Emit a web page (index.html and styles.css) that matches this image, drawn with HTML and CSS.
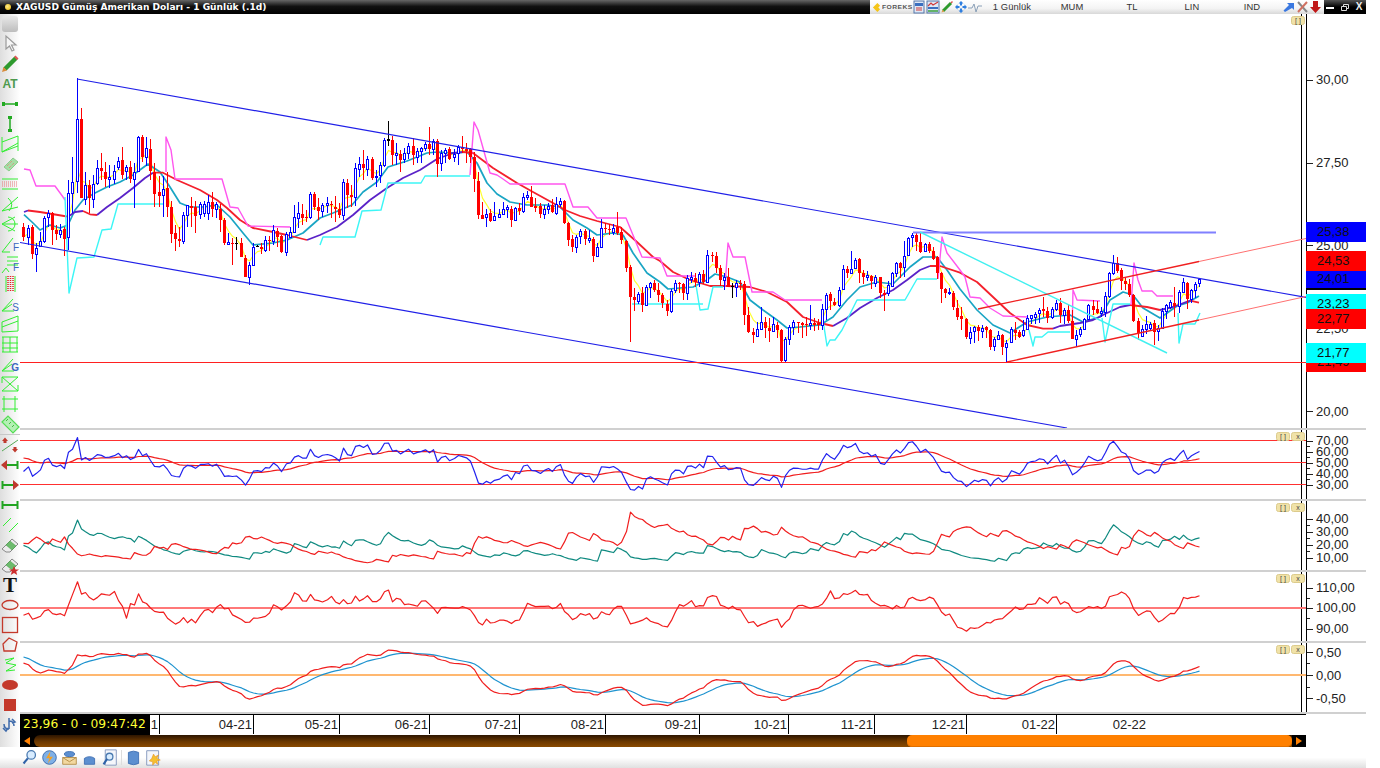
FILE: index.html
```html
<!DOCTYPE html>
<html lang="tr">
<head>
<meta charset="utf-8">
<title>XAGUSD</title>
<link rel="stylesheet" href="styles.css">
</head>
<body>
<div class="app">
  <header class="titlebar">
    <div class="title-left"><span class="dot"></span><span class="title">XAGUSD Gümüş Amerikan Doları - 1 Günlük (.1d)</span></div>
    <div class="tools">
      <div class="logo"><svg class="chev" viewBox="0 0 10 12"><path d="M6 1 1 6l5 5 3-3-2-2 2-2z"/></svg><span>FOREKS</span></div>
      <svg class="tool" viewBox="0 0 14 14"><rect class="t-panel" x="2" y="1" width="10" height="12"/><rect class="t-blue" x="3" y="3" width="8" height="3"/><path class="t-red" d="M4 8h6M4 10h6"/></svg>
      <svg class="tool" viewBox="0 0 14 14"><rect class="t-panel" x="1" y="1" width="12" height="12"/><path class="t-red" d="M2 6l3-3 2 2 5-3"/><path class="t-green" d="M2 11h10"/><rect class="t-blue" x="2" y="7" width="10" height="2"/></svg>
      <svg class="tool" viewBox="0 0 14 14"><path class="t-pencil" d="M3 11 11 3"/><path class="t-tip" d="M12 1l1 1-1.500 1.500-1-1z"/><path class="t-nib" d="M1.500 12.500l1-3 2 2z"/></svg>
      <svg class="tool" viewBox="0 0 14 14"><path class="t-diamond" d="M7 1l2.500 2.500h-1.500v2h-2v-2H4.500zM7 13l-2.500-2.500H6v-2h2v2h1.500zM1 7l2.500-2.500V6h2v2h-2v1.500zM13 7l-2.500 2.500V8h-2V6h2V4.500z"/></svg>
      <svg class="tool" viewBox="0 0 14 14"><path class="t-pulse" d="M0 8h4l2-4 2 8 2-6h4"/></svg>
      <span class="cell">1 Günlük</span><span class="cell">MUM</span><span class="cell">TL</span><span class="cell">LIN</span><span class="cell">IND</span>
      <svg class="tool" viewBox="0 0 14 14"><path class="t-arrow-blue" d="M3 12 1.500 10.500 7 5 5 3h7v7L10 8z"/></svg>
      <svg class="tool tool-n" viewBox="0 0 13 14"><path class="t-cross" d="M2 2l9 10"/><path class="t-cross2" d="M11 2 2 12"/></svg>
      <svg class="tool tool-n" viewBox="0 0 13 14"><path class="t-arrow-red" d="M4 1h5v6h3l-5.500 6L1 7h3z"/></svg>
    </div>
    <div class="winctl">
      <svg class="winbtn" viewBox="0 0 14 14"><rect class="w" x="2" y="7" width="8" height="2"/></svg>
      <svg class="winbtn" viewBox="0 0 14 14"><path class="w-line" d="M3.500 6.500h5v4h-5zM5.500 6V4.500h5v4H9"/></svg>
      <span class="winx">X</span>
    </div>
  </header>

  <div class="workspace">
    <nav class="sidebar">
      <div class="sb-top"></div>
      <svg class="ico" viewBox="0 0 20 20"><path class="i-cursor" d="M6 2v13l3.500-3 2.500 5 2-1-2.500-5H16z"/></svg>
      <svg class="ico" viewBox="0 0 20 20"><path class="i-pencil" d="M5 15 16 4"/><path class="i-tip" d="M15.500 1.500l3 3-1.500 1.500-3-3z"/><path class="i-nib" d="M2 18l1.500-5 3.500 3.500z"/></svg>
      <div class="ico ico-at">AT</div>
      <svg class="ico" viewBox="0 0 20 20"><path class="i-beam" d="M4 10h12"/><rect class="i-beamf" x="2" y="8" width="3" height="4"/><rect class="i-beamf" x="15" y="8" width="3" height="4"/></svg>
      <svg class="ico" viewBox="0 0 20 20"><path class="i-beam" d="M10 4v12"/><rect class="i-beamf" x="8" y="2" width="4" height="3"/><rect class="i-beamf" x="8" y="15" width="4" height="3"/></svg>
      <svg class="ico" viewBox="0 0 20 20"><path class="i-g" d="M2 3v15M2 8 18 2M2 18 18 12M18 2v15M2 18l16-9"/></svg>
      <svg class="ico" viewBox="0 0 20 20"><path class="i-gem" d="M4 13 13 4l5 4-9 9z"/><path class="i-dots" d="M7 12l5-5M9 14l5-5"/></svg>
      <svg class="ico" viewBox="0 0 20 20"><path class="i-g" d="M2 5h16M2 15h16"/><path class="i-dots" d="M2 8h16M2 10h16M2 12h16"/></svg>
      <svg class="ico" viewBox="0 0 20 20"><path class="i-g" d="M2 17 18 3M2 17l16-4"/><path class="i-g" d="M8 4q7 6 1 13"/></svg>
      <svg class="ico" viewBox="0 0 20 20"><path class="i-g" d="M2 10h16M2 10 15 3M2 10l13 7"/><path class="i-g" d="M8 3a7 7 0 0 1 0 14"/></svg>
      <div class="ico ico-l"><svg viewBox="0 0 20 20"><path class="i-g" d="M2 18 13 4M2 18h8"/></svg><span class="letter">F</span></div>
      <div class="ico ico-l"><svg viewBox="0 0 20 20"><path class="i-g" d="M7 3h11M7 7h11M7 11h11M2 19l4-5 3 4"/></svg><span class="letter">F</span></div>
      <svg class="ico" viewBox="0 0 20 20"><path class="i-g" d="M6 2v16M15 2v16"/><path class="i-dots-w" d="M8 2v16M10.500 2v16M13 2v16"/></svg>
      <div class="ico ico-l"><svg viewBox="0 0 20 20"><path class="i-g" d="M2 17 13 5M2 17h12M2 17l10-7"/></svg><span class="letter">S</span></div>
      <svg class="ico" viewBox="0 0 20 20"><path class="i-g" d="M2 8 18 2v15L2 18zM2 13l16-6"/></svg>
      <svg class="ico" viewBox="0 0 20 20"><path class="i-g" d="M2 3h16M2 9h16M2 14h16M2 18h16M3 3v15M10 3v15M17 3v15"/></svg>
      <div class="ico ico-l"><svg viewBox="0 0 20 20"><path class="i-g" d="M2 17 13 5M2 17h12M2 17l10-7"/></svg><span class="letter lg">G</span></div>
      <svg class="ico" viewBox="0 0 20 20"><path class="i-g" d="M2 3h16L2 17h16M2 3l16 14M2 3v6M18 11v6"/></svg>
      <svg class="ico" viewBox="0 0 20 20"><path class="i-g" d="M4 2v16M15 2v16M2 5h16M2 15h16"/></svg>
      <svg class="ico" viewBox="0 0 20 20"><path class="i-ruler" d="M2 8 8 2l11 11-6 6z"/><path class="i-rulerm" d="M6 7l2-2M9 10l2-2M12 13l2-2"/></svg>
      <div class="sb-sep"></div>
      <svg class="ico" viewBox="0 0 20 20"><path class="i-red" d="M2 6 5 2.500 8 6H6.500v2h-3V6z"/><path class="i-red" d="M12 14l3 3.500 3-3.500h-1.500v-2h-3v2z"/><path class="i-g2" d="M2 16 18 5"/></svg>
      <svg class="ico" viewBox="0 0 20 20"><path class="i-line" d="M7 10h11M17.500 6v8"/><path class="i-red" d="M1 10l6-5v10z"/></svg>
      <svg class="ico" viewBox="0 0 20 20"><path class="i-line" d="M2 10h11M2.500 6v8"/><path class="i-red" d="M19 10l-6-5v10z"/></svg>
      <svg class="ico" viewBox="0 0 20 20"><path class="i-line" d="M2 10h16M2.500 6v8M17.500 6v8"/></svg>
      <svg class="ico" viewBox="0 0 20 20"><path class="i-g" d="M3 11 11 3M9 17l9-9"/></svg>
      <svg class="ico" viewBox="0 0 20 20"><path class="i-erase" d="M2 14 12 4l6 5-8 8H6z"/><path class="i-gband" d="M6 10l4-4 6 5-4 4z"/></svg>
      <svg class="ico" viewBox="0 0 20 20"><path class="i-erase" d="M2 14 12 4l6 5-8 8H6z"/><path class="i-gband" d="M6 10l4-4 6 5-4 4z"/><path class="i-star" d="M14 11l1.500 3.500H19l-2.800 2 1 3.500-3.200-2-3.200 2 1-3.500-2.800-2h3.500z"/></svg>
      <div class="ico ico-t">T</div>
      <svg class="ico" viewBox="0 0 20 20"><ellipse class="i-shape" cx="10" cy="10" rx="8" ry="4.500"/></svg>
      <svg class="ico" viewBox="0 0 20 20"><rect class="i-shape" x="2.500" y="2.500" width="15" height="15"/></svg>
      <svg class="ico" viewBox="0 0 20 20"><path class="i-shape" d="M3 9 9 3l8 4-2 9H4z"/></svg>
      <svg class="ico" viewBox="0 0 20 20"><path class="i-g" d="M5 5l9-2-8 5 10 2-10 6 9-1"/></svg>
      <svg class="ico" viewBox="0 0 20 20"><ellipse class="i-fill" cx="10" cy="10" rx="8" ry="5"/></svg>
      <svg class="ico" viewBox="0 0 20 20"><rect class="i-fill" x="4" y="4" width="12" height="12"/></svg>
      <svg class="ico" viewBox="0 0 20 20"><path class="i-swap" d="M4 9q0 5 5 5M9 3v11M14 11q0-5-5-5M12 4l3 3-3 1M3 13l3 3 2-3"/></svg>
    </nav>

    <main class="main">
      <section class="pane pane-main">
        <svg class="plot" id="p1" viewBox="20 14 1286 414" width="1286" height="414"></svg>
        <div class="axis" data-ticks="80 163 245 328 411">
          <span class="val" style="top:58px">30,00</span>
          <span class="val" style="top:141px">27,50</span>
          <span class="val" style="top:224px">25,00</span>
          <span class="val" style="top:307px">22,50</span>
          <span class="val" style="top:390px">20,00</span>
          <span class="tag t-blue-bg" style="top:208px">25,38</span>
          <span class="tag t-blue-bg tag-last" style="top:255px">24,01</span>
          <span class="tag t-red-bg" style="top:237px">24,53</span>
          <span class="tag t-cyan-bg" style="top:280px">23,23</span>
          <span class="tag t-red-bg" style="top:295px">22,77</span>
          <span class="tag t-red-bg" style="top:338px">21,49</span>
          <span class="tag t-cyan-bg" style="top:329px">21,77</span>
        </div>
        <div class="pbtns"><span class="pbtn">[ ]</span></div>
      </section>
      <section class="pane">
        <svg class="plot" id="p2" viewBox="20 430 1286 69" width="1286" height="69"></svg>
        <div class="axis" data-ticks="441 452 463 474 485" data-minor="446 457 468 479">
          <span class="val" style="top:3px">70,00</span>
          <span class="val" style="top:14px">60,00</span>
          <span class="val" style="top:25px">50,00</span>
          <span class="val" style="top:36px">40,00</span>
          <span class="val" style="top:47px">30,00</span>
        </div>
        <div class="pbtns"><span class="pbtn">[ ]</span><span class="pbtn">x</span></div>
      </section>
      <section class="pane">
        <svg class="plot" id="p3" viewBox="20 501 1286 69" width="1286" height="69"></svg>
        <div class="axis" data-ticks="519 532 545 558" data-minor="525 538 551">
          <span class="val" style="top:10px">40,00</span>
          <span class="val" style="top:23px">30,00</span>
          <span class="val" style="top:36px">20,00</span>
          <span class="val" style="top:49px">10,00</span>
        </div>
        <div class="pbtns"><span class="pbtn">[ ]</span><span class="pbtn">x</span></div>
      </section>
      <section class="pane">
        <svg class="plot" id="p4" viewBox="20 572 1286 69" width="1286" height="69"></svg>
        <div class="axis" data-ticks="588 608 629" data-minor="598 618">
          <span class="val" style="top:8px">110,00</span>
          <span class="val" style="top:28px">100,00</span>
          <span class="val" style="top:49px">90,00</span>
        </div>
        <div class="pbtns"><span class="pbtn">[ ]</span><span class="pbtn">x</span></div>
      </section>
      <section class="pane">
        <svg class="plot" id="p5" viewBox="20 643 1286 69" width="1286" height="69"></svg>
        <div class="axis" data-ticks="652 675 698" data-minor="663 687">
          <span class="val" style="top:2px">0,50</span>
          <span class="val" style="top:25px">0,00</span>
          <span class="val" style="top:48px">-0,50</span>
        </div>
        <div class="pbtns"><span class="pbtn">[ ]</span><span class="pbtn">x</span></div>
      </section>
      <div class="timeaxis">
        <div class="clock">23,96 - 0 - 09:47:42</div>
        <div class="tcell">1</div>
        <div class="tcell">04-21</div>
        <div class="tcell">05-21</div>
        <div class="tcell">06-21</div>
        <div class="tcell">07-21</div>
        <div class="tcell">08-21</div>
        <div class="tcell">09-21</div>
        <div class="tcell">10-21</div>
        <div class="tcell">11-21</div>
        <div class="tcell">12-21</div>
        <div class="tcell">01-22</div>
        <div class="tcell">02-22</div>
      </div>
      <div class="scroll">
        <div class="cap"><span class="arr-l"></span></div>
        <div class="track"><div class="thumb"></div></div>
        <div class="cap"><span class="arr-r"></span></div>
      </div>
    </main>
  </div>

  <footer class="bottombar">
    <svg class="bico" viewBox="0 0 20 20"><circle class="b-glass" cx="12" cy="7" r="5"/><path class="b-handle" d="M8 11 3 17"/></svg>
    <svg class="bico" viewBox="0 0 20 20"><circle class="b-ball" cx="10" cy="10" r="8"/><path class="b-bolt" d="M11 3 6 11h4l-2 6 6-8h-4z"/></svg>
    <svg class="bico" viewBox="0 0 20 20"><path class="b-env" d="M2 10h16v8H2z"/><path class="b-envl" d="M2 10l8 5 8-5"/><ellipse class="b-can" cx="10" cy="6" rx="6" ry="3"/></svg>
    <svg class="bico" viewBox="0 0 20 20"><path class="b-can" d="M4 11q6-4 12 0v7H4z"/></svg>
    <svg class="bico" viewBox="0 0 20 20"><path class="b-page" d="M5 1h13v18H5z"/><circle class="b-glass" cx="10" cy="9" r="4"/><path class="b-handle" d="M7 12 3 18"/></svg>
    <span class="bsep"></span>
    <svg class="bico" viewBox="0 0 20 20"><path class="b-can" d="M4 4q6-3 12 0v13q-6 3-12 0z"/></svg>
    <svg class="bico" viewBox="0 0 20 20"><path class="b-page" d="M2 2h14v17H2z"/><path class="b-sun" d="M10 6l2 3 4-2-2 4 4 2-4 1 1 4-3-2-3 3v-4l-4-1 3-3z"/></svg>
  </footer>
</div>
<script src="chart.js"></script>
</body>
</html>
```
FILE: styles.css
```css
* { box-sizing: border-box; }
html, body { margin: 0; padding: 0; height: 768px; overflow: hidden; background: #fff; }
body { font-family: "Liberation Sans", Arial, sans-serif; color: #222; }
.app { width: 1366px; height: 768px; display: flex; flex-direction: column; }

/* title bar */
.titlebar { height: 14px; display: flex; flex: none; }
.title-left { width: 870px; display: flex; align-items: center; gap: 5px; padding-left: 5px; background: linear-gradient(#666, #111 45%, #000); }
.dot { width: 6px; height: 6px; border-radius: 50%; background: radial-gradient(circle at 40% 40%, #ffe98a, #e8b800); }
.title { color: #fff; font: bold 9.08px/14px "DejaVu Sans", sans-serif; white-space: nowrap; }
.tools { flex: 1; display: flex; align-items: center; padding-left: 2px; background: linear-gradient(#fff, #f4f4f4 60%, #d8d8d8); }
.logo { width: 40px; display: flex; align-items: center; gap: 1px; }
.logo span { font: bold 6px/14px "Liberation Sans", sans-serif; letter-spacing: .4px; color: #555; transform: scaleX(1.12); transform-origin: left; }
.chev { width: 9px; height: 11px; flex: none; }
.chev path { fill: #f5c518; }
.tool { width: 14px; height: 14px; flex: none; }
.tool-n { width: 13px; }
.cell { width: 60px; text-align: center; font: 9.4px/14px "Liberation Sans", sans-serif; letter-spacing: .1px; color: #333; flex: none; }
.t-panel { fill: #dfe8f5; stroke: #5577aa; stroke-width: 1; }
.t-blue { fill: #3a6fc0; }
.t-red { fill: none; stroke: #d03a3a; stroke-width: 1.2; }
.t-green { fill: none; stroke: #3aa03a; stroke-width: 1.5; }
.t-pencil { fill: none; stroke: #2c9a2c; stroke-width: 3; }
.t-tip { fill: #e05050; }
.t-nib { fill: #e0a050; }
.t-diamond { fill: #2f7fe0; }
.t-pulse { fill: none; stroke: #8aa0b8; stroke-width: 1; }
.t-arrow-blue { fill: #3a78e0; }
.t-cross { fill: none; stroke: #888; stroke-width: 2; }
.t-cross2 { fill: none; stroke: #d07060; stroke-width: 2; }
.t-arrow-red { fill: #c01818; }
.winctl { width: 42px; display: flex; align-items: center; background: linear-gradient(#555, #000 50%); }
.winbtn { width: 14px; height: 14px; flex: none; }
.w { fill: #fff; }
.w-line { fill: none; stroke: #ddd; stroke-width: 1; }
.winx { width: 14px; text-align: center; font: bold 10px/14px "Liberation Sans", sans-serif; color: #eee; }

/* layout */
.workspace { flex: 1; display: flex; min-height: 0; }
.sidebar { width: 20px; flex: none; padding-top: 2px; display: flex; flex-direction: column; background: linear-gradient(to right, #dedede, #fff); }
.sb-top { height: 16px; margin: 0 2px 2px; flex: none; border-radius: 3px; background: linear-gradient(#e8e8e8, #bdbdbd); }
.ico { width: 20px; height: 20px; flex: none; display: block; position: relative; }
.sb-sep { height: 1px; flex: none; background: #c8c8c8; }
.ico-at { font: bold 12px/20px "Liberation Sans", sans-serif; color: #4e9a4e; text-align: center; }
.ico-t { font: bold 21px/20px "Liberation Serif", serif; color: #111; text-align: center; }
.ico-l svg { width: 20px; height: 20px; display: block; }
.letter { position: absolute; right: 1px; bottom: 1px; font: 10px/10px "Liberation Sans", sans-serif; color: #3a66c0; }
.lg { font-weight: bold; }
.i-cursor { fill: #f6f6f6; stroke: #9a9a9a; stroke-width: 1.2; }
.i-pencil { fill: none; stroke: #2e9a2e; stroke-width: 4.500; }
.i-tip { fill: #e05555; }
.i-nib { fill: #d88a3a; }
.i-beam { fill: none; stroke: #22aa22; stroke-width: 1.5; }
.i-beamf { fill: #22aa22; }
.i-g { fill: none; stroke: #33ee33; stroke-width: 1; }
.i-g2 { fill: none; stroke: #55aa55; stroke-width: 1; }
.i-gem { fill: #a5dfa5; stroke: #8ccc8c; stroke-width: 1; }
.i-dots { fill: none; stroke: #e87878; stroke-width: 1; stroke-dasharray: 1 1; }
.i-dots-w { fill: none; stroke: #e02020; stroke-width: 1.5; stroke-dasharray: 1 1; }
.i-ruler { fill: #b4f0b4; stroke: #55dd55; stroke-width: 1.2; }
.i-rulerm { fill: none; stroke: #44bb44; stroke-width: 1; }
.i-red { fill: #bf3a2e; }
.i-line { fill: none; stroke: #22a522; stroke-width: 2; }
.i-erase { fill: #ececec; stroke: #888; stroke-width: 1; }
.i-gband { fill: #6dbb6d; stroke: #3f9a3f; stroke-width: .5; }
.i-star { fill: #cc2f2f; }
.i-shape { fill: none; stroke: #c4392b; stroke-width: 1.3; }
.i-fill { fill: #c4392b; }
.i-swap { fill: none; stroke: #3e6aaa; stroke-width: 1.5; }

.main { flex: 1; display: flex; flex-direction: column; min-width: 0; }
.pane { height: 71px; flex: none; display: flex; position: relative; border-bottom: 2px solid #d0d0d0; }
.pane-main { height: 416px; }
.plot { flex: none; display: block; overflow: hidden; border-right: 0; }
.axis { flex: 1; position: relative; border-left: 1px solid #000; }
.axis svg { position: absolute; left: 0; top: 0; }
.val { position: absolute; left: 9px; font-size: 13px; line-height: 16px; color: #222; white-space: nowrap; }
.tag { position: absolute; left: -1px; width: 60px; height: 20px; padding-left: 11px; font-size: 13px; line-height: 20px; color: #111; }
.tag-last { height: 21px; border-bottom: 2px solid #000; line-height: 19px; }
.t-blue-bg { background: #0000ff; }
.t-red-bg { background: #ff0000; }
.t-cyan-bg { background: #00ffff; }
.pbtns { position: absolute; top: 2px; left: 1256px; width: 29px; display: flex; justify-content: flex-end; gap: 1px; }
.pbtn { width: 14px; height: 9px; flex: none; font-size: 7px; line-height: 8px; text-align: center; color: #444; border-radius: 2.5px; background: #f0e2a8; border: 1px solid #dccb8c; white-space: nowrap; }

/* chart classes */
.vline { stroke: #000; stroke-width: 1; shape-rendering: crispEdges; }
.hl-red { stroke: #ff3030; stroke-width: 1.4; shape-rendering: crispEdges; }
.hl-red-l { stroke: #ff7878; stroke-width: 2; shape-rendering: crispEdges; }
.hl-orange { stroke: #ffb870; stroke-width: 2; shape-rendering: crispEdges; }
.ln { fill: none; stroke-linejoin: round; }
.ma-purple { stroke: #5a22c8; stroke-width: 1.8; }
.ma-red { stroke: #f4202c; stroke-width: 1.8; }
.teal { stroke: #19a5c4; stroke-width: 1.7; }
.yel { stroke: #ffff33; stroke-width: 1.2; }
.mag { stroke: #ff55ee; stroke-width: 1.4; }
.cya { stroke: #3cf6f6; stroke-width: 1.4; }
.tr-blue { stroke: #2020e8; stroke-width: 1.15; }
.tr-blueh { stroke: #8080ff; stroke-width: 2; }
.tr-red { stroke: #f02020; stroke-width: 1.3; }
.tr-red-thin { stroke: #ff7070; stroke-width: 1; }
.tr-redh { stroke: #ff2020; stroke-width: 1; shape-rendering: crispEdges; }
.tr-cyan { stroke: #40f0f0; stroke-width: 1.4; }
.c-blue { fill: #0000ff; shape-rendering: crispEdges; }
.c-red { fill: #ff0000; shape-rendering: crispEdges; }
.c-black { fill: #000; shape-rendering: crispEdges; }
.c-box { fill: #fff; stroke: #0000ff; stroke-width: 1; shape-rendering: crispEdges; }
.s-blue { stroke: #2222ee; stroke-width: 1.2; }
.s-red { stroke: #f01e1e; stroke-width: 1.2; }
.s-green { stroke: #0f8a80; stroke-width: 1.2; }
.s-sky { stroke: #1f93cf; stroke-width: 1.2; }
.tick { stroke: #222; stroke-width: 1; shape-rendering: crispEdges; }

/* time axis */
.timeaxis { height: 21px; flex: none; width: 1286px; display: grid; grid-template-columns: 130px 10px 94px 86px 90px 90px 86px 94px 89px 86px 92px 90px 90px; border-top: 1px solid #000; background: #fff; overflow: hidden; }
.clock { background: #000; color: #ffff33; font: 12.3px/19px "DejaVu Sans", sans-serif; height: 20px; padding-left: 3px; white-space: nowrap; overflow: hidden; }
.tcell { border-right: 1px solid #000; text-align: right; font-size: 13px; line-height: 19px; color: #222; padding-right: 1px; height: 19px; overflow: hidden; }
.tcell:last-child { border-right: 0; }

/* scrollbar */
.scroll { height: 12px; flex: none; width: 1286px; display: flex; background: #000; }
.cap { width: 14px; flex: none; display: flex; align-items: center; justify-content: center; }
.arr-l { width: 0; height: 0; border-style: solid; border-width: 4px 6px 4px 0; border-color: transparent #ff8000 transparent transparent; }
.arr-r { width: 0; height: 0; border-style: solid; border-width: 4px 0 4px 6px; border-color: transparent transparent transparent #ff8000; }
.track { flex: 1; display: flex; justify-content: flex-end; border-radius: 6px 0 0 6px; background: linear-gradient(#2c1500, #6b3800 55%, #8a4a00); }
.thumb { width: 385px; border-radius: 5px; background: #ff8000; box-shadow: inset 0 -1px 0 #e07000; }

/* bottom toolbar */
.bottombar { height: 21px; flex: none; display: flex; align-items: center; gap: 3px; padding-left: 21px; background: linear-gradient(#fff, #fff 50%, #e0e0e0); }
.bico { width: 17px; height: 17px; flex: none; }
.bsep { width: 1px; height: 15px; background: #ddd; flex: none; }
.b-glass { fill: #d8ecff; stroke: #4a7ab0; stroke-width: 1.5; }
.b-handle { fill: none; stroke: #2f62a8; stroke-width: 2.5; }
.b-ball { fill: #7fb0e6; stroke: #2f62a8; stroke-width: 1; }
.b-bolt { fill: #f5a020; }
.b-env { fill: #f2d8a0; stroke: #b08840; stroke-width: 1; }
.b-envl { fill: none; stroke: #b08840; stroke-width: 1; }
.b-can { fill: #5c8fd0; stroke: #3a6cb0; stroke-width: 1; }
.b-page { fill: #f4f6fb; stroke: #7a8fb8; stroke-width: 1; }
.b-sun { fill: #f5c030; stroke: #e08a20; stroke-width: .6; }
```
FILE: chart.js
```javascript
(function () {
  // Candles: "zoomX colour top bottom high low" in 3x zoom coordinates of a section.
  var SECTIONS = [
    { ox: 20, oy: 130, s: "10 r 292 322 280 332|25 b 295 320 285 345|37 r 292 373 285 388|49 b 354 372 340 425|61 b 332 348 305 350|73 b 264 332 258 340|85 b 250 262 240 290|97 r 250 300 245 345|109 r 300 312 285 330|121 b 300 312 282 325|133 r 298 326 290 378|145 b 190 322 150 360|157 b 156 190 80 250|172 b -33 153 -156 190|184 r -33 204 -66 205|196 b 164 206 125 225|208 r 165 205 150 250|220 b 162 208 135 235|232 b 115 158 90 165|244 r 115 124 68 150|256 r 126 146 95 170|268 b 142 146 105 175|283 b 122 146 105 162|295 b 92 112 80 120|307 r 90 134 52 148|319 b 112 122 105 150|331 r 110 146 92 160|343 b 127 146 100 235|355 b 20 122 18 125|367 r 20 80 15 95|379 b 55 80 22 108|391 r 58 122 28 150|403 r 125 192 100 232|418 r 187 197 138 232|430 b 178 194 138 260|442 r 175 232 125 260|454 r 232 312 212 338|466 r 310 328 285 362|478 r 328 334 290 350|490 b 255 332 245 342|502 b 226 254 225 290|514 r 228 233 200 290|526 r 232 258 212 308|541 b 222 253 215 268|553 b 222 250 214 262|565 b 215 250 195 270|577 r 215 238 185 262|589 b 222 238 215 265|601 r 238 270 222 305|613 r 270 340 265 345|625 b 337 343 310 345|637 r 340 343 325 405|649 k 340 343 322 360|664 r 338 380 325 382|676 r 384 442 375 442|688 b 405 442 395 465|700 b 352 404 340 405|712 k 348 351 346 352|724 r 350 358 338 372|736 b 330 360 318 365|748 r 330 332 318 362|760 b 300 332 285 345|772 r 303 320 295 350|784 r 318 366 315 370|799 b 312 365 305 378|811 b 306 320 290 325|823 b 262 305 225 310|835 b 250 264 215 295|847 r 252 264 222 285|859 r 262 265 240 275|871 b 193 262 185 268|883 r 192 232 185 240|895 r 232 244 205 270" },
    { ox: 320, oy: 120, s: "7 b 256 274 250 290|22 b 250 254 232 280|34 r 252 255 244 295|46 r 260 266 228 305|58 r 266 284 250 295|70 b 186 284 178 300|82 r 190 226 178 265|94 r 226 230 195 260|106 b 145 230 130 258|118 b 132 146 110 170|130 r 132 144 90 180|142 b 118 146 108 168|157 r 118 174 112 180|169 b 168 172 150 200|181 b 136 166 125 190|193 b 60 136 55 140|205 k 58 62 2 78|217 r 60 106 48 135|229 b 100 104 68 135|241 r 102 120 90 155|253 b 100 118 85 130|265 b 78 100 70 118|280 r 78 106 55 135|292 b 94 110 85 130|304 b 84 92 80 130|316 b 72 84 65 92|328 r 72 86 20 105|340 b 62 86 58 105|352 r 64 132 58 172|364 b 100 130 90 152|376 b 90 100 85 130|388 r 88 116 82 120|403 b 102 112 88 125|415 b 80 100 75 135|427 r 80 86 48 100|439 r 86 94 70 130|451 r 88 110 85 130|463 r 110 176 95 215|475 r 182 284 155 298|487 r 286 298 245 298|499 b 282 292 268 320|511 r 278 302 268 305|523 b 288 300 245 300|538 b 282 290 268 295|550 b 268 282 245 285|562 b 260 268 255 295|574 r 266 300 258 322|586 b 264 300 262 302|598 r 264 272 250 285|610 b 232 272 218 278|622 b 226 232 212 240|634 r 232 260 198 262|646 r 258 263 235 275|661 r 258 282 250 295|673 b 268 282 255 298|685 b 258 268 248 282|697 r 254 276 238 280|709 b 253 278 232 285|721 b 244 252 235 262|733 r 244 308 240 312|745 r 310 360 305 378|757 r 358 382 345 395|769 b 352 380 345 400|781 b 332 348 328 372|796 r 332 358 328 375|808 b 354 360 330 370|820 r 358 408 350 425|832 b 382 408 370 410|844 b 324 380 298 382|856 r 324 328 310 340|868 r 326 330 312 345|880 b 324 336 312 345|892 r 322 338 276 345|904 r 336 360 320 372|919 r 362 444 360 455|931 r 440 530 435 665|943 r 532 540 505 572|955 b 522 542 515 552|967 r 520 555 500 575|979 b 500 556 495 558|991 b 490 500 485 535|1003 r 488 510 480 515|1015 r 510 524 490 545" },
    { ox: 660, oy: 130, s: "7 r 495 518 490 535|22 r 522 542 510 558|34 b 484 542 478 548|46 b 460 480 450 490|58 r 460 462 455 490|70 r 462 488 458 510|82 b 445 488 435 510|94 b 442 446 425 460|106 r 445 456 430 470|118 b 433 456 425 470|130 r 432 456 420 462|142 b 376 455 360 458|157 r 376 379 365 395|169 r 378 414 365 430|181 r 414 450 405 468|193 b 442 450 430 480|205 r 442 470 415 472|217 k 468 472 460 505|229 b 460 470 450 500|241 r 458 462 450 480|253 r 462 554 452 585|265 r 556 606 530 610|280 r 606 616 595 640|292 b 598 618 575 620|304 b 576 596 532 600|316 r 576 594 560 625|328 r 595 602 565 635|340 b 582 602 560 605|352 r 585 600 575 625|364 r 600 692 598 700|376 b 628 690 620 697|388 b 592 626 585 645|400 b 576 590 570 615|415 r 576 580 575 610|427 r 578 584 575 625|439 r 582 586 562 618|451 b 580 584 525 600|463 r 578 584 565 602|475 r 578 584 568 600|487 b 538 584 522 600|499 b 496 538 488 570|511 r 492 514 485 540|523 r 516 524 505 528|538 b 480 524 472 530|550 b 418 476 405 480|562 r 418 428 408 445|574 b 418 430 364 432|586 b 390 414 385 418|598 r 388 430 385 460|610 r 430 440 420 462|622 b 436 440 424 452|634 r 438 452 436 478|646 b 440 458 435 470|661 r 442 490 440 505|673 r 490 496 480 542|685 b 466 490 452 498|697 b 430 468 425 470|709 b 398 428 395 440|721 r 400 414 395 445|733 b 378 410 332 440|745 b 324 376 320 378|757 b 314 322 308 350|769 r 314 336 305 362|781 r 336 366 305 368|796 b 342 362 338 365|808 r 342 362 335 370|820 r 362 386 350 390|832 r 380 430 378 448|844 r 430 476 425 518|856 r 478 490 475 505|868 b 486 490 475 495|880 r 488 532 484 540|892 r 534 560 510 570|904 r 558 568 530 600|919 r 568 622 565 628|931 b 606 624 592 642|943 b 592 604 588 640|955 r 590 604 585 632|967 b 594 602 585 625|979 r 592 600 588 625|991 r 600 650 598 660|1003 b 628 648 622 662|1015 b 616 626 602 630" },
    { ox: 960, oy: 230, s: "127 r 315 350 312 375|139 b 338 350 330 398|154 b 298 335 290 338|166 r 300 308 275 330|178 r 306 322 300 325|190 b 300 316 270 320|202 b 264 298 255 300|214 b 256 264 254 282|226 b 252 262 246 282|238 b 240 250 235 280|250 r 238 242 200 262|262 r 244 264 230 278|277 b 236 260 232 268|289 b 220 238 210 242|301 r 220 254 205 280|313 b 240 254 235 282|325 r 240 272 222 278|337 r 272 326 240 328|349 b 316 326 300 350|361 b 298 312 290 322|373 b 268 298 265 300|385 b 226 268 222 270|400 r 228 240 210 255|412 r 238 250 212 252|424 b 242 248 232 262|436 b 198 246 185 262|448 b 128 198 125 205|460 b 100 130 75 135|472 r 100 124 82 128|484 r 120 152 115 180|496 r 152 162 142 180|508 r 162 196 148 200|520 r 196 274 192 276|535 r 274 308 265 330|547 b 298 318 285 322|559 b 282 298 258 312|571 b 282 294 276 302|583 r 280 306 270 345|595 b 294 304 285 332|607 b 242 294 235 296|619 b 226 242 222 268|631 b 216 232 210 238|643 r 218 228 172 260|658 b 186 228 180 250|670 b 156 186 145 190|682 r 160 206 155 236|694 b 180 206 178 220|706 b 162 180 155 205|718 b 148 160 145 170" }
  ];

  var bars = [];
  SECTIONS.forEach(function (sec) {
    sec.s.split("|").forEach(function (e) {
      var a = e.split(" ");
      var f = function (v) { return sec.oy + Number(v) / 3; };
      bars.push({
        x: Math.round(sec.ox + Number(a[0]) / 3),
        col: a[1],
        top: Math.round(f(a[2])),
        bot: Math.round(f(a[3])),
        hi: Math.round(f(a[4])),
        lo: Math.round(f(a[5]))
      });
    });
  });

  var price = function (y) { return 30 - (y - 80) / 33.1; };
  bars.forEach(function (b) {
    var cy = b.col === "r" ? b.bot : b.top;
    var oy = b.col === "r" ? b.top : b.bot;
    if (b.col === "k") { cy = b.top; oy = b.top; }
    b.cy = cy;
    b.c = price(cy);
    b.o = price(oy);
    b.h = price(Math.min(b.hi, b.top));
    b.l = price(Math.max(b.lo, b.bot));
  });

  var MA = [
    ["ma-purple", [[24,212],[28,210.5]]],
    ["ma-red", [[28,210.5],[40,212],[64,216],[68,216.7]]],
    ["ma-purple", [[68,216.7],[75,212],[83,211]]],
    ["ma-red", [[83,211],[90,214.3],[97,215]]],
    ["ma-purple", [[97,215],[107,207],[120,198],[133,188],[145,178],[153,172.7]]],
    ["ma-red", [[153,172.7],[163,172.7],[177,180],[200,190],[217,200],[227,208],[240,220],[253,228],[273,232],[287,235],[307,240]]],
    ["ma-purple", [[307,240],[320,235],[337,227],[353,215],[370,200],[387,188],[403,178],[420,170],[437,159],[453,153],[463,152]]],
    ["ma-red", [[463,152],[473,153],[493,168],[517,183],[533,192],[553,203],[565,210],[580,216],[597,221],[620,227],[637,242],[653,257],[660,261],[673,272],[690,280],[710,286],[727,286],[750,287],[767,292],[787,302],[803,317],[820,323],[833,326]]],
    ["ma-purple", [[833,326],[847,318],[860,308],[877,298],[893,290],[907,280],[920,270],[930,266]]],
    ["ma-red", [[930,266],[940,266],[960,272.7],[977,282],[993,297],[1010,313],[1027,325],[1043,328.7],[1053,328.7]]],
    ["ma-purple", [[1053,328.7],[1060,326],[1080,323],[1093,320],[1107,313],[1120,307],[1130,305]]],
    ["ma-red", [[1130,305],[1147,307],[1160,310]]],
    ["ma-purple", [[1160,310],[1173,307],[1190,300.7]]],
    ["ma-red", [[1190,300.7],[1199,302.7]]]
  ];
  var TEAL = [[24,214.7],[33,223],[40,230],[50,225],[60,228],[68,225],[75,210],[83,200],[95,193],[107,187],[120,182],[133,175],[148,164],[160,172],[170,187],[180,203],[190,207],[203,207],[217,205],[230,217],[243,233],[253,245],[273,243],[287,240],[303,233],[320,218],[333,213],[352,205],[363,192],[377,182],[388,167],[407,161],[427,153],[437,152],[457,153],[467,152],[477,163],[487,183],[497,194],[510,202],[527,205],[547,205],[560,207],[573,220],[587,228],[597,235],[613,233],[623,235],[633,253],[647,273],[660,282],[668,289],[680,288],[693,287],[707,280],[715,274],[727,277],[740,282],[750,300],[763,310],[777,320],[787,328],[800,327],[820,325],[833,317],[847,300],[860,287],[877,282],[893,284],[910,267],[923,257],[937,257],[947,270],[960,289],[977,310],[993,325],[1010,333],[1027,322],[1047,317],[1070,315],[1083,322],[1100,317],[1110,300],[1123,292],[1133,295],[1143,308],[1160,318],[1177,306],[1187,303],[1199,296]];
  var MAG = [
    [[24,169],[30,170],[36,186],[55,186],[63,197],[65,200]],
    [[166,172],[166,137],[171,150],[175,179],[222,179],[230,207],[238,208],[248,226],[290,227]],
    [[470,175],[474,122],[478,130],[490,173],[497,175],[503,179],[510,184],[565,184],[573,207],[588,207],[597,218],[626,218],[642,257],[660,258],[667,276],[695,276]],
    [[725,287],[728,243],[733,257],[745,257],[752,292],[773,292],[785,300],[822,300]],
    [[938,279],[942,237],[947,253],[960,270],[965,277],[970,297],[980,298],[990,308],[1003,316],[1028,317]],
    [[1072,333],[1073,290],[1077,300],[1100,301]],
    [[1131,305],[1134,263],[1138,280],[1142,291],[1152,291],[1157,296],[1173,296]]
  ];
  var CYA = [
    [[65,197],[69,293],[77,258],[94,257],[102,230],[111,229],[118,204],[164,204]],
    [[320,245],[323,237],[355,237],[362,211],[381,210],[388,183],[421,183],[425,176],[470,176]],
    [[632,304],[703,304]],
    [[696,285],[700,310],[708,309],[713,287],[723,287]],
    [[823,320],[827,346],[830,340],[835,340],[842,330],[857,300],[905,300],[917,279],[937,279]],
    [[1029,330],[1033,346],[1035,337],[1042,337],[1048,332],[1070,332]],
    [[1102,318],[1105,342],[1113,304],[1130,304]],
    [[1178,313],[1179,343],[1183,324],[1195,324],[1200,313]]
  ];

  function pts(a) { return a.map(function (p) { return p[0] + "," + p[1]; }).join(" "); }
  function poly(a, cls) { return '<polyline class="ln ' + cls + '" points="' + pts(a) + '"/>'; }
  function hline(y, x1, x2, cls) { return '<line class="' + cls + '" x1="' + x1 + '" x2="' + x2 + '" y1="' + y + '" y2="' + y + '"/>'; }
  function frame(y1, y2) { return '<line class="vline" x1="1301.5" x2="1301.5" y1="' + y1 + '" y2="' + y2 + '"/>'; }
  function ema(vals, n, seed) {
    var k = 2 / (n + 1), e = seed, out = [];
    vals.forEach(function (v) { e = e + k * (v - e); out.push(e); });
    return out;
  }
  function series(vals, map) { return vals.map(function (v, i) { return [bars[i].x + 0.5, +map(v).toFixed(2)]; }); }

  /* main pane */
  var h = frame(14, 428);
  var yel = ema(bars.map(function (b) { return b.cy; }), 4, bars[0].cy);
  h += poly(series(yel, function (v) { return v; }), "yel");
  h += poly(TEAL, "teal");
  MA.forEach(function (s) { h += poly(s[1], s[0]); });
  MAG.forEach(function (s) { h += poly(s, "mag"); });
  CYA.forEach(function (s) { h += poly(s, "cya"); });
  bars.forEach(function (b) {
    var col = b.col === "b" ? "c-blue" : b.col === "r" ? "c-red" : "c-black";
    h += '<rect class="' + col + '" x="' + b.x + '" y="' + b.hi + '" width="1" height="' + Math.max(1, b.lo - b.hi) + '"/>';
    if (b.col === "b") {
      h += '<rect class="c-box" x="' + (b.x - 0.5) + '" y="' + (b.top + 0.5) + '" width="2" height="' + Math.max(1, b.bot - b.top) + '"/>';
    } else {
      h += '<rect class="' + col + '" x="' + (b.x - 1) + '" y="' + b.top + '" width="3" height="' + Math.max(1, b.bot - b.top) + '"/>';
    }
  });
  h += poly([[77,79],[1306,297.4]], "tr-blue");
  h += poly([[20,242.5],[1067,428]], "tr-blue");
  h += hline(232.5, 913, 1216, "ln tr-blueh");
  h += poly([[920,232],[1167,353]], "tr-cyan");
  h += poly([[1007,362],[1199,320]], "tr-red");
  h += poly([[1199,320],[1306,296.5]], "tr-red-thin");
  h += poly([[978,309],[1199,261.500]], "tr-red");
  h += poly([[1199,261.500],[1306,238.5]], "tr-red-thin");
  h += hline(362.5, 20, 1306, "tr-redh");
  document.getElementById("p1").innerHTML = h;

  /* RSI */
  var gain = 0.12, loss = 0.16, rsi = [], prev = bars[0].c + 0.05;
  bars.forEach(function (b) {
    var d = b.c - prev; prev = b.c;
    gain = (gain * 13 + Math.max(d, 0)) / 14;
    loss = (loss * 13 + Math.max(-d, 0)) / 14;
    rsi.push(100 - 100 / (1 + gain / loss));
  });
  var rsiY = function (v) { return 441 + (70 - v) * 1.1; };
  h = frame(430, 499);
  [440.5, 462.5, 484.5].forEach(function (y) { h += hline(y, 20, 1306, "hl-red"); });
  h += poly(series(ema(rsi, 18, 56), rsiY), "s-red");
  h += poly(series(rsi, rsiY), "s-blue");
  document.getElementById("p2").innerHTML = h;

  /* DMI */
  var tr = 0.5, pd = 0.107, md = 0.115, dip = [], dim = [], pb = { c: bars[0].c, h: bars[0].h + 0.05, l: bars[0].l - 0.05 };
  bars.forEach(function (b) {
    var t = Math.max(b.h - b.l, Math.abs(b.h - pb.c), Math.abs(b.l - pb.c));
    var up = b.h - pb.h, dn = pb.l - b.l;
    tr = (tr * 13 + t) / 14;
    pd = (pd * 13 + (up > dn && up > 0 ? up : 0)) / 14;
    md = (md * 13 + (dn > up && dn > 0 ? dn : 0)) / 14;
    dip.push(100 * pd / tr);
    dim.push(100 * md / tr);
    pb = b;
  });
  var dmiY = function (v) { return 519 + (40 - v) * 1.3; };
  h = frame(501, 570);
  h += poly(series(dip, dmiY), "s-green");
  h += poly(series(dim, dmiY), "s-red");
  document.getElementById("p3").innerHTML = h;

  /* Momentum */
  var mom = bars.map(function (b, i) { return 100 * b.c / (i >= 12 ? bars[i - 12].c : 26.2); });
  var momY = function (v) { return 608 - (v - 100) * 2.03; };
  h = frame(572, 641);
  h += hline(608, 20, 1306, "hl-red-l");
  h += poly(series(mom, momY), "s-red");
  document.getElementById("p4").innerHTML = h;

  /* MACD */
  var cl = bars.map(function (b) { return b.c; });
  var e12 = ema(cl, 12, cl[0] + 0.53), e26 = ema(cl, 26, cl[0] + 0.2);
  var macd = e12.map(function (v, i) { return v - e26[i]; });
  var macdY = function (v) { return 675.3 - v * 46; };
  h = frame(643, 712);
  h += hline(675, 20, 1306, "hl-orange");
  h += poly(series(ema(macd, 9, 0.43), macdY), "s-sky");
  h += poly(series(macd, macdY), "s-red");
  document.getElementById("p5").innerHTML = h;

  /* axis ticks */
  var panes = document.querySelectorAll(".pane");
  panes.forEach(function (p) {
    var ax = p.querySelector(".axis");
    var top = p.getBoundingClientRect().top;
    var mk = function (attr, len) {
      return (ax.getAttribute(attr) || "").split(" ").filter(Boolean).map(function (y) {
        var yy = Number(y) - top + 0.5;
        return '<line class="tick" x1="0" x2="' + len + '" y1="' + yy + '" y2="' + yy + '"/>';
      }).join("");
    };
    var s = document.createElementNS("http://www.w3.org/2000/svg", "svg");
    s.setAttribute("width", "59");
    s.setAttribute("height", p.clientHeight);
    s.innerHTML = mk("data-ticks", 6) + mk("data-minor", 3);
    ax.insertBefore(s, ax.firstChild);
  });
})();
```
